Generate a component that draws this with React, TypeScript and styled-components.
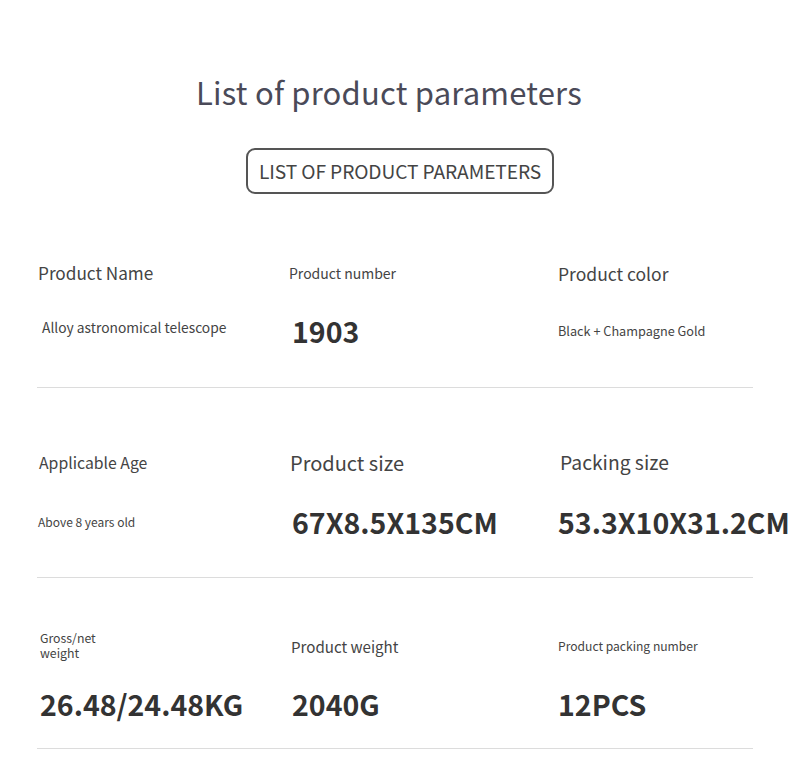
import React from "react";
import styled, { createGlobalStyle } from "styled-components";

const Global = createGlobalStyle`
  html, body { margin: 0; padding: 0; background: #ffffff; }
  body { font-family: "Noto Sans CJK SC", "Noto Sans", sans-serif; }
`;

const Page = styled.div`
  width: 800px;
  height: 774px;
  overflow: hidden;
  background: #fff;
  display: flex;
  flex-direction: column;
  align-items: center;
`;

const Title = styled.h1`
  margin: 72px 0 0 -22px;
  height: 40px;
  line-height: 40px;
  font-size: 31px;
  font-weight: 400;
  color: #4a4a58;
  letter-spacing: 0.2px;
`;

const Badge = styled.div`
  margin: 36px 0 0 0;
  box-sizing: border-box;
  width: 308px;
  height: 46px;
  border: 2px solid #555;
  border-radius: 9px;
  display: flex;
  align-items: center;
  justify-content: center;
  font-size: 19.2px;
  color: #444;
  letter-spacing: -0.1px;
`;

const Table = styled.div`
  margin: 64px 0 0 37px;
  width: 716px;
  align-self: flex-start;
`;

const Row = styled.div<{ $pt: number; $pb: number; $gap: number }>`
  display: grid;
  grid-template-columns: 252px 269px 1fr;
  grid-template-rows: 30px 40px;
  row-gap: ${(p) => p.$gap}px;
  padding-top: ${(p) => p.$pt}px;
  padding-bottom: ${(p) => p.$pb}px;
  border-bottom: 1.5px solid #dcdcdc;
`;

const Label = styled.div<{ $size: number; $dx?: number }>`
  display: flex;
  flex-direction: column;
  justify-content: center;
  padding-left: ${(p) => p.$dx ?? 0}px;
  font-size: ${(p) => p.$size}px;
  line-height: 1.2;
  color: #444;
  white-space: nowrap;
`;

const LabelLine = styled.span`
  display: block;
  height: 15px;
  line-height: 15px;
`;

const Value = styled.div<{ $size: number; $bold?: boolean; $dx?: number; $dy?: number }>`
  display: flex;
  align-items: center;
  padding-left: ${(p) => p.$dx ?? 0}px;
  margin-top: ${(p) => p.$dy ?? 0}px;
  font-size: ${(p) => p.$size}px;
  font-weight: ${(p) => (p.$bold ? 700 : 400)};
  color: ${(p) => (p.$bold ? "#333" : "#444")};
  white-space: nowrap;
`;

export default function App() {
  return (
    <>
      <Global />
      <Page>
        <Title>List of product parameters</Title>
        <Badge>LIST OF PRODUCT PARAMETERS</Badge>
        <Table>
          <Row $pt={0} $pb={37} $gap={22}>
            <Label $size={17.2} $dx={1}>Product Name</Label>
            <Label $size={14}>Product number</Label>
            <Label $size={17.5}>Product color</Label>
            <Value $size={13.8} $dx={5} $dy={-6}>Alloy astronomical telescope</Value>
            <Value $size={28.5} $bold $dx={3}>1903</Value>
            <Value $size={12.7}>Black + Champagne Gold</Value>
          </Row>
          <Row $pt={60} $pb={36} $gap={23}>
            <Label $size={15.8} $dx={2}>Applicable Age</Label>
            <Label $size={20} $dx={1}>Product size</Label>
            <Label $size={19.3} $dx={2}>Packing size</Label>
            <Value $size={12} $dx={1}>Above 8 years old</Value>
            <Value $size={28.5} $bold $dx={3}>67X8.5X135CM</Value>
            <Value $size={28.5} $bold>53.3X10X31.2CM</Value>
          </Row>
          <Row $pt={53} $pb={25} $gap={22}>
            <Label $size={12.3} $dx={3}>
              <LabelLine>Gross/net</LabelLine>
              <LabelLine>weight</LabelLine>
            </Label>
            <Label $size={15.1} $dx={2}>Product weight</Label>
            <Label $size={12.1}>Product packing number</Label>
            <Value $size={28.5} $bold $dx={3}>26.48/24.48KG</Value>
            <Value $size={28.5} $bold $dx={3}>2040G</Value>
            <Value $size={28.5} $bold>12PCS</Value>
          </Row>
        </Table>
      </Page>
    </>
  );
}
